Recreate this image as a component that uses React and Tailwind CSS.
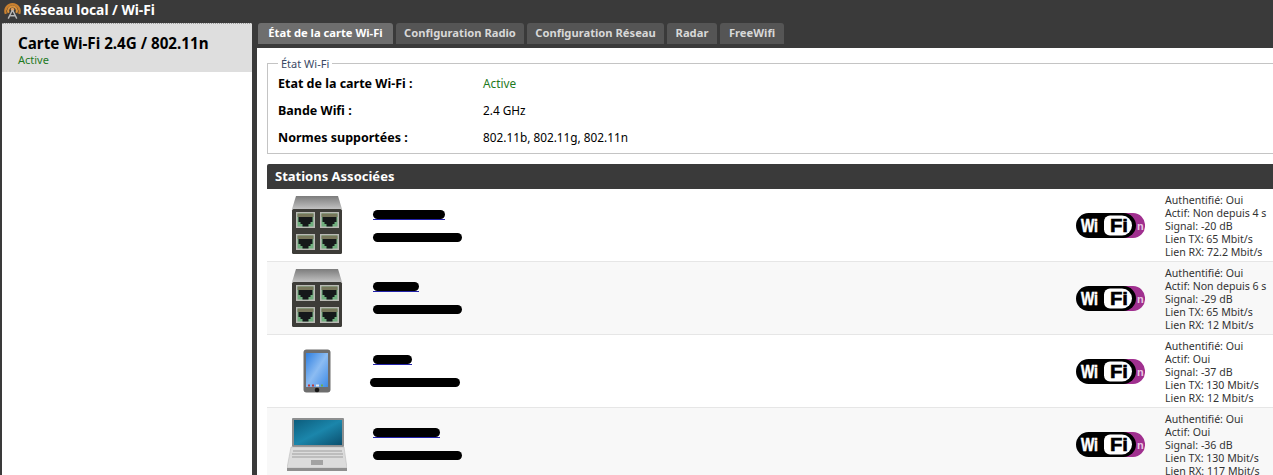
import React from 'react';

const font = "font-['Noto_Sans','Open_Sans',sans-serif]";

const AntennaIcon = () => (
    <svg width="19" height="19" viewBox="0 0 20 19" className="shrink-0">
        <path d="M3 13 A7.5 7.5 0 1 1 17 13" fill="none" stroke="#c9802f" strokeWidth="2.4" />
        <path d="M6 12 A4.6 4.6 0 1 1 14 12" fill="none" stroke="#d9913a" strokeWidth="2.2" />
        <circle cx="10" cy="8.5" r="1.8" fill="#e0a060" />
        <path d="M10 9 L5.5 18 M10 9 L14.5 18 M7.5 15 H12.5" stroke="#b8b8b8" strokeWidth="1.5" fill="none" />
    </svg>
);

const Port = ({ x, y }) => (
    <g transform={`translate(${x} ${y})`}>
        <rect width="19" height="16" fill="#b9b9b4" />
        <rect x="1.5" y="1.5" width="16" height="13" fill="#6fae7d" />
        <rect x="1.5" y="1.5" width="16" height="3.5" fill="#77765a" />
        <path d="M2.5 5 H16.5 V10 H14.5 V12 H12.5 V14.5 H6.5 V12 H4.5 V10 H2.5 Z" fill="#15181a" />
    </g>
);

const SwitchIcon = () => (
    <svg width="52" height="58" viewBox="0 0 52 58">
        <defs>
            <linearGradient id="roof" x1="0" y1="0" x2="0" y2="1">
                <stop offset="0" stopColor="#7c7c7c" />
                <stop offset="1" stopColor="#c2c2c2" />
            </linearGradient>
        </defs>
        <path d="M5 0 H47 L51 13 H1 Z" fill="url(#roof)" />
        <rect x="1" y="13" width="50" height="45" rx="1.5" fill="#3d3c38" />
        <Port x={5} y={16} />
        <Port x={29} y={16} />
        <Port x={5} y={38} />
        <Port x={29} y={38} />
    </svg>
);

const PhoneIcon = () => (
    <svg width="28" height="45" viewBox="0 0 28 45">
        <defs>
            <linearGradient id="screen" x1="0" y1="0" x2="1" y2="1">
                <stop offset="0" stopColor="#2f7fe0" />
                <stop offset="0.5" stopColor="#8cbcf2" />
                <stop offset="1" stopColor="#3f8be6" />
            </linearGradient>
        </defs>
        <rect x="0.5" y="0.5" width="27" height="43" rx="3" fill="#6e6e6e" />
        <rect x="3" y="4" width="22" height="34" fill="url(#screen)" />
        <rect x="5" y="35.5" width="2" height="2" fill="#c03a3a" />
        <rect x="9" y="35.5" width="2" height="2" fill="#c03a3a" />
        <rect x="13" y="35.5" width="3" height="2" fill="#e8e8e8" />
        <rect x="18" y="35.5" width="2" height="2" fill="#6cb04a" />
        <circle cx="14" cy="41" r="2.3" fill="#161616" />
    </svg>
);

const LaptopIcon = () => (
    <svg width="60" height="55" viewBox="0 0 60 55">
        <defs>
            <linearGradient id="lcd" x1="0" y1="0" x2="1" y2="1">
                <stop offset="0" stopColor="#0c5d7d" />
                <stop offset="0.5" stopColor="#1b86ab" />
                <stop offset="1" stopColor="#0b4f6e" />
            </linearGradient>
        </defs>
        <rect x="5" y="1" width="52" height="29" rx="1" fill="#8d8f90" />
        <rect x="7" y="3" width="48" height="25" fill="url(#lcd)" />
        <path d="M4 30 H57 L60 51 H0 Z" fill="#dcdcdc" stroke="#b5b5b5" strokeWidth="0.5" />
        <path d="M6 34 H55 M5 37 H56 M5 40 H56" stroke="#b3b3b3" strokeWidth="1.4" />
        <rect x="24" y="43" width="12" height="5" fill="#a3a3a3" />
        <rect x="0" y="51" width="60" height="3" fill="#8f8f8f" />
    </svg>
);

const WifiLogo = () => (
    <svg width="69" height="25" viewBox="0 0 69 25" fontFamily="'Liberation Sans', sans-serif" fontWeight="bold">
        <path d="M48 0 H57 A12 12 0 0 1 69 12.5 A12 12 0 0 1 57 25 H48 Z" fill="#a0308f" />
        <rect x="0" y="0" width="60" height="25" rx="12.5" fill="#000000" />
        <path d="M34 2.5 H46 A10 10 0 0 1 56 12.5 A10 10 0 0 1 46 22.5 H34 A6 6 0 0 1 28 16.5 V8.5 A6 6 0 0 1 34 2.5 Z" fill="#ffffff" />
        <text x="5" y="19" fontSize="19" fill="#ffffff" stroke="#ffffff" strokeWidth="0.6" textLength="17" lengthAdjust="spacingAndGlyphs">Wi</text>
        <text x="34" y="19" fontSize="19" fill="#000000" stroke="#000000" strokeWidth="0.6" textLength="18" lengthAdjust="spacingAndGlyphs">Fi</text>
        <text x="61" y="17" fontSize="11" fill="#e8c8e2">n</text>
    </svg>
);

const Redacted = ({ width, left = 0, link }) => (
    <div className={`relative h-[9px] rounded-full bg-black ${link ? "after:absolute after:left-0 after:right-0 after:top-[9px] after:h-px after:bg-[#2222aa]" : ""}`} style={{ width, marginLeft: left }} />
);

const stations = [
    { icon: <SwitchIcon />, name: 72, sub: 89, subLeft: 0, pt: "pt-[21px]", lines: ['Authentifié: Oui', 'Actif: Non depuis 4 s', 'Signal: -20 dB', 'Lien TX: 65 Mbit/s', 'Lien RX: 72.2 Mbit/s'] },
    { icon: <SwitchIcon />, name: 46, sub: 89, subLeft: 0, pt: "pt-[20px]", lines: ['Authentifié: Oui', 'Actif: Non depuis 6 s', 'Signal: -29 dB', 'Lien TX: 65 Mbit/s', 'Lien RX: 12 Mbit/s'] },
    { icon: <PhoneIcon />, name: 39, sub: 90, subLeft: -3, pt: "pt-[20px]", lines: ['Authentifié: Oui', 'Actif: Oui', 'Signal: -37 dB', 'Lien TX: 130 Mbit/s', 'Lien RX: 12 Mbit/s'] },
    { icon: <LaptopIcon />, name: 67, sub: 89, subLeft: 0, pt: "pt-[20px]", lines: ['Authentifié: Oui', 'Actif: Oui', 'Signal: -36 dB', 'Lien TX: 130 Mbit/s', 'Lien RX: 117 Mbit/s'] },
];

const tabs = ['Configuration Radio', 'Configuration Réseau', 'Radar', 'FreeWifi'];

const App = () => {
    return (
        <div className={`flex h-[475px] w-[1273px] flex-col overflow-hidden bg-[#3a3a3a] ${font}`}>
            <div className="flex h-[23px] shrink-0 items-center gap-[1px] pb-[2px] pl-[3px] text-[13.8px] font-bold text-white">
                <AntennaIcon />
                <span>Réseau local / Wi-Fi</span>
            </div>
            <div className="flex min-h-0 flex-1">
                <div className="ml-[2px] w-[250px] shrink-0 bg-white">
                    <div className="h-[49px] border-t border-dotted border-[#999999] bg-[#dedede] pl-[16px] pt-[10px]">
                        <div className="text-[15.2px] font-bold leading-[18px] text-black">Carte Wi-Fi 2.4G / 802.11n</div>
                        <div className="text-[11px] leading-[15px] text-[#1f7a1f]">Active</div>
                    </div>
                </div>
                <div className="ml-[5px] flex min-w-0 flex-1 flex-col">
                    <div className="flex h-[21px] shrink-0 gap-[3px] pl-[1px] text-[11.2px] font-bold">
                        <div className="flex w-[135px] items-center justify-center rounded-t-[3px] bg-[#6e6e6e] text-white">État de la carte Wi-Fi</div>
                        <div className="flex w-[128px] items-center justify-center rounded-t-[3px] bg-[#555555] text-[#d8d8d8]">{tabs[0]}</div>
                        <div className="flex w-[137px] items-center justify-center rounded-t-[3px] bg-[#555555] text-[#d8d8d8]">{tabs[1]}</div>
                        <div className="flex w-[50px] items-center justify-center rounded-t-[3px] bg-[#555555] text-[#d8d8d8]">{tabs[2]}</div>
                        <div className="flex w-[64px] items-center justify-center rounded-t-[3px] bg-[#555555] text-[#d8d8d8]">{tabs[3]}</div>
                    </div>
                    <div className="mt-[4px] min-h-0 flex-1 bg-white pl-[10px] pt-[9px]">
                        <fieldset className="h-[97px] w-[1020px] border border-[#c4c4c4] pl-[10px]">
                            <legend className="px-[3px] text-[11px] leading-[13px] text-[#3b4a66]">État Wi-Fi</legend>
                            <div className="flex h-[27px] items-center pt-[1px] text-[11.8px] text-black">
                                <span className="w-[205px] text-[12.5px] font-bold">Etat de la carte Wi-Fi :</span>
                                <span className="text-[#1f7a1f]">Active</span>
                            </div>
                            <div className="flex h-[27px] items-center text-[11.8px] text-black">
                                <span className="w-[205px] pt-[2px] text-[12.5px] font-bold">Bande Wifi :</span>
                                <span>2.4 GHz</span>
                            </div>
                            <div className="flex h-[27px] items-center text-[11.8px] text-black">
                                <span className="w-[205px] pt-[2px] text-[12.5px] font-bold">Normes supportées :</span>
                                <span>802.11b, 802.11g, 802.11n</span>
                            </div>
                        </fieldset>
                        <div className="mt-[10px] flex h-[25px] w-[1020px] items-center rounded-t-[2px] bg-[#3a3a3a] pl-[8px] text-[13px] font-bold text-white">Stations Associées</div>
                        {stations.map((s, i) => (
                            <div key={i} className={`flex h-[73px] w-[1020px] border-b border-[#e6e6e6] ${i % 2 ? "bg-[#f8f8f8]" : "bg-white"}`}>
                                <div className="flex w-[100px] shrink-0 items-center justify-center">{s.icon}</div>
                                <div className={`flex w-[709px] shrink-0 flex-col gap-[14px] pl-[6px] ${s.pt}`}>
                                    <Redacted width={s.name} link />
                                    <Redacted width={s.sub} left={s.subLeft} />
                                </div>
                                <div className="flex w-[89px] shrink-0 items-center">
                                    <WifiLogo />
                                </div>
                                <div className="flex flex-col justify-center whitespace-nowrap pt-[2px] text-[10.6px] leading-[13px] text-[#333333]">
                                    {s.lines.map((line) => (
                                        <span key={line}>{line}</span>
                                    ))}
                                </div>
                            </div>
                        ))}
                    </div>
                </div>
            </div>
        </div>
    );
};

export default App;
